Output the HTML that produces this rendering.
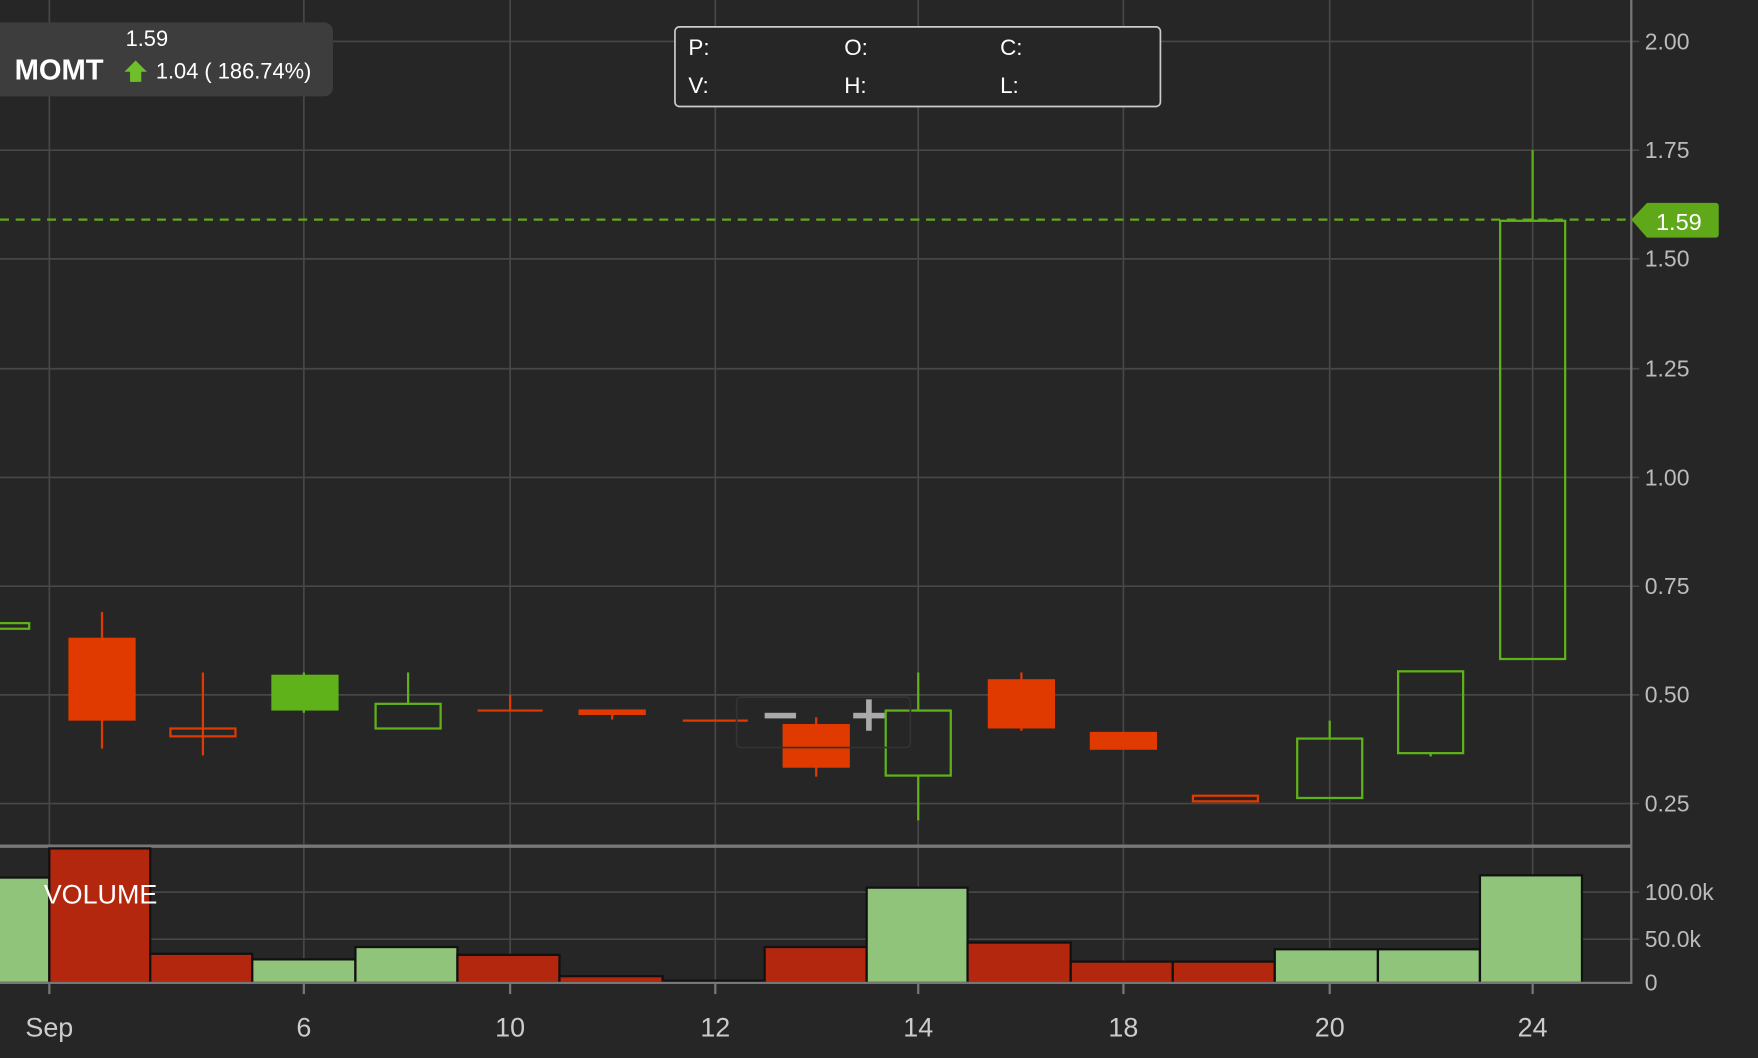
<!DOCTYPE html><html><head><style>html,body{margin:0;padding:0;background:#262626;overflow:hidden}svg{display:block}text{font-family:"Liberation Sans",sans-serif}</style></head><body>
<svg width="1758" height="1058" viewBox="0 0 1568 944" preserveAspectRatio="none" xmlns="http://www.w3.org/2000/svg">
<rect width="1568" height="944" fill="#262626"/>
<g stroke="#474747" stroke-width="1.5">
<line x1="44" y1="0" x2="44" y2="877"/><line x1="271" y1="0" x2="271" y2="877"/><line x1="455" y1="0" x2="455" y2="877"/><line x1="638" y1="0" x2="638" y2="877"/><line x1="819" y1="0" x2="819" y2="877"/><line x1="1002" y1="0" x2="1002" y2="877"/><line x1="1186" y1="0" x2="1186" y2="877"/><line x1="1367" y1="0" x2="1367" y2="877"/>
<line x1="0" y1="37" x2="1462" y2="37"/><line x1="0" y1="134" x2="1462" y2="134"/><line x1="0" y1="231" x2="1462" y2="231"/><line x1="0" y1="329" x2="1462" y2="329"/><line x1="0" y1="426" x2="1462" y2="426"/><line x1="0" y1="523" x2="1462" y2="523"/><line x1="0" y1="620" x2="1462" y2="620"/><line x1="0" y1="717" x2="1462" y2="717"/>
<line x1="0" y1="796" x2="1462" y2="796"/><line x1="0" y1="838" x2="1462" y2="838"/>
</g>
<line x1="1455" y1="0" x2="1455" y2="878" stroke="#777" stroke-width="2"/>
<line x1="0" y1="755" x2="1455" y2="755" stroke="#777" stroke-width="3"/>
<g stroke="#777" stroke-width="2"><line x1="44" y1="877" x2="44" y2="887"/><line x1="271" y1="877" x2="271" y2="887"/><line x1="455" y1="877" x2="455" y2="887"/><line x1="638" y1="877" x2="638" y2="887"/><line x1="819" y1="877" x2="819" y2="887"/><line x1="1002" y1="877" x2="1002" y2="887"/><line x1="1186" y1="877" x2="1186" y2="887"/><line x1="1367" y1="877" x2="1367" y2="887"/></g>
<g fill="#bbb" font-size="20.5">
<text x="1467" y="44">2.00</text><text x="1467" y="141">1.75</text><text x="1467" y="238">1.50</text><text x="1467" y="336">1.25</text><text x="1467" y="433">1.00</text><text x="1467" y="530">0.75</text><text x="1467" y="627">0.50</text><text x="1467" y="724">0.25</text>
<text x="1467" y="803">100.0k</text><text x="1467" y="845">50.0k</text><text x="1467" y="884">0</text>
</g>
<g fill="#ccc" font-size="24" text-anchor="middle">
<text x="44" y="925">Sep</text><text x="271" y="925">6</text><text x="455" y="925">10</text><text x="638" y="925">12</text><text x="819" y="925">14</text><text x="1002" y="925">18</text><text x="1186" y="925">20</text><text x="1367" y="925">24</text>
</g>
<line x1="0" y1="196" x2="1455" y2="196" stroke="#5fa81a" stroke-width="2" stroke-dasharray="8,6"/>
<path d="M1455 196 L1469 181 H1530 Q1533 181 1533 184 V209 Q1533 212 1530 212 H1469 Z" fill="#5fa81a"/>
<text x="1477" y="205" fill="#fff" font-size="21">1.59</text>
<g stroke="#e03a00" stroke-width="2">
<line x1="91" y1="546" x2="91" y2="668"/><rect x="62" y="570" width="58" height="72" fill="#e03a00"/>
<line x1="181" y1="600" x2="181" y2="674"/><rect x="152" y="650" width="58" height="7" fill="none"/>
<line x1="455" y1="620" x2="455" y2="634"/><line x1="426" y1="634" x2="484" y2="634"/>
<line x1="546" y1="634" x2="546" y2="642"/><rect x="517" y="634" width="58" height="3" fill="#e03a00"/>
<line x1="609" y1="643" x2="667" y2="643"/>
<line x1="728" y1="640" x2="728" y2="693"/><rect x="699" y="647" width="58" height="37" fill="#e03a00"/>
<line x1="911" y1="600" x2="911" y2="652"/><rect x="882" y="607" width="58" height="42" fill="#e03a00"/>
<rect x="973" y="654" width="58" height="14" fill="#e03a00"/>
<rect x="1064" y="710" width="58" height="5" fill="none"/>
</g>
<g stroke="#5fb21a" stroke-width="2">
<rect x="-5" y="556" width="31" height="5" fill="none"/>
<line x1="271" y1="600" x2="271" y2="636"/><rect x="243" y="603" width="58" height="30" fill="#5fb21a"/>
<line x1="364" y1="600" x2="364" y2="628"/><rect x="335" y="628" width="58" height="22" fill="none"/>
<line x1="819" y1="600" x2="819" y2="732"/><rect x="790" y="634" width="58" height="58" fill="#262626"/>
<line x1="1186" y1="643" x2="1186" y2="659"/><rect x="1157" y="659" width="58" height="53" fill="none"/>
<line x1="1276" y1="672" x2="1276" y2="675"/><rect x="1247" y="599" width="58" height="73" fill="none"/>
<line x1="1367" y1="134" x2="1367" y2="197"/><rect x="1338" y="197" width="58" height="391" fill="none"/>
</g>
<rect x="657" y="622" width="155" height="45" rx="4" fill="none" stroke="#333" stroke-width="1.5"/>
<rect x="682" y="636" width="28" height="5" fill="#aaa"/>
<rect x="761" y="636" width="28" height="5" fill="#aaa"/><rect x="772.5" y="624" width="5" height="28" fill="#aaa"/>
<g stroke="#111" stroke-width="2">
<rect x="-2" y="783" width="46" height="94" fill="#8fc47a"/>
<rect x="44" y="757" width="90" height="120" fill="#b3270e"/>
<rect x="134" y="851" width="91" height="26" fill="#b3270e"/>
<rect x="225" y="856" width="92" height="21" fill="#8fc47a"/>
<rect x="317" y="845" width="91" height="32" fill="#8fc47a"/>
<rect x="408" y="852" width="91" height="25" fill="#b3270e"/>
<rect x="499" y="871" width="92" height="6" fill="#b3270e"/>
<rect x="591" y="875" width="91" height="2" fill="#b3270e"/>
<rect x="682" y="845" width="91" height="32" fill="#b3270e"/>
<rect x="773" y="792" width="90" height="85" fill="#8fc47a"/>
<rect x="863" y="841" width="92" height="36" fill="#b3270e"/>
<rect x="955" y="858" width="91" height="19" fill="#b3270e"/>
<rect x="1046" y="858" width="91" height="19" fill="#b3270e"/>
<rect x="1137" y="847" width="92" height="30" fill="#8fc47a"/>
<rect x="1229" y="847" width="91" height="30" fill="#8fc47a"/>
<rect x="1320" y="781" width="91" height="96" fill="#8fc47a"/>
</g>
<line x1="0" y1="877" x2="1455" y2="877" stroke="#777" stroke-width="2"/>
<text x="39" y="806" fill="#fff" font-size="24">VOLUME</text>
<rect x="-10" y="20" width="307" height="66" rx="8" fill="#3d3d3d"/>
<text x="112" y="41" fill="#fff" font-size="19.5">1.59</text>
<text x="13" y="71" fill="#fff" font-size="26" font-weight="bold">MOMT</text>
<path d="M121 54 L131 64 H126 V73 H116 V64 H111 Z" fill="#6fbf2a"/>
<text x="139" y="70" fill="#fff" font-size="19.5">1.04 ( 186.74%)</text>
<rect x="602" y="24" width="433" height="71" rx="4" fill="#262626" stroke="#ccc" stroke-width="1.5"/>
<g fill="#fff" font-size="20"><text x="614" y="49">P:</text><text x="753" y="49">O:</text><text x="892" y="49">C:</text><text x="614" y="83">V:</text><text x="753" y="83">H:</text><text x="892" y="83">L:</text></g>
</svg>
</body></html>
